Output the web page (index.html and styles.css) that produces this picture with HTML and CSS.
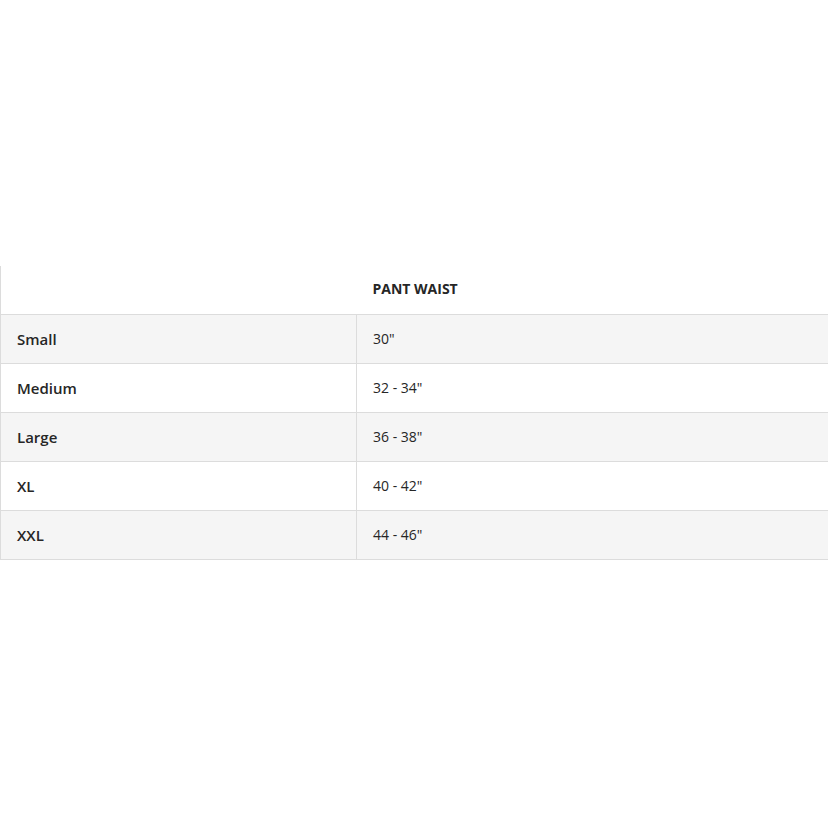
FILE: index.html
```html
<!DOCTYPE html>
<html>
<head>
<meta charset="utf-8">
<link rel="stylesheet" href="styles.css">
</head>
<body>
<div class="wrap">
  <table class="size-table">
    <thead>
      <tr><th class="c1"></th><th class="c2">PANT WAIST</th></tr>
    </thead>
    <tbody>
      <tr class="alt"><td class="c1">Small</td><td class="c2">30"</td></tr>
      <tr><td class="c1">Medium</td><td class="c2">32 - 34"</td></tr>
      <tr class="alt"><td class="c1">Large</td><td class="c2">36 - 38"</td></tr>
      <tr><td class="c1">XL</td><td class="c2">40 - 42"</td></tr>
      <tr class="alt"><td class="c1">XXL</td><td class="c2">44 - 46"</td></tr>
    </tbody>
  </table>
</div>
</body>
</html>
```
FILE: styles.css
```css
html, body {
  margin: 0;
  padding: 0;
  background: #fff;
  overflow: hidden;
}
.wrap {
  padding-top: 266px;
  width: 860px;
}
.size-table {
  border-collapse: collapse;
  width: 860px;
  font-family: "Open Sans", "Noto Sans", sans-serif;
  font-size: 14px;
  color: #262626;
}
.size-table th,
.size-table td {
  border: 1px solid #dcdcdc;
  text-align: left;
  padding: 0 16px;
  height: 49px;
  box-sizing: border-box;
}
.size-table thead th {
  border-top: none;
  font-weight: 700;
  background: #fff;
  height: 48px;
  padding-bottom: 2px;
}
.size-table thead th.c1 {
  border-right-style: hidden;
}
.size-table .c1 {
  width: 356px;
  font-weight: 600;
  font-size: 15px;
}
.size-table td.c2 {
  font-weight: 400;
}
.size-table tr.alt td {
  background: #f5f5f5;
}
```
